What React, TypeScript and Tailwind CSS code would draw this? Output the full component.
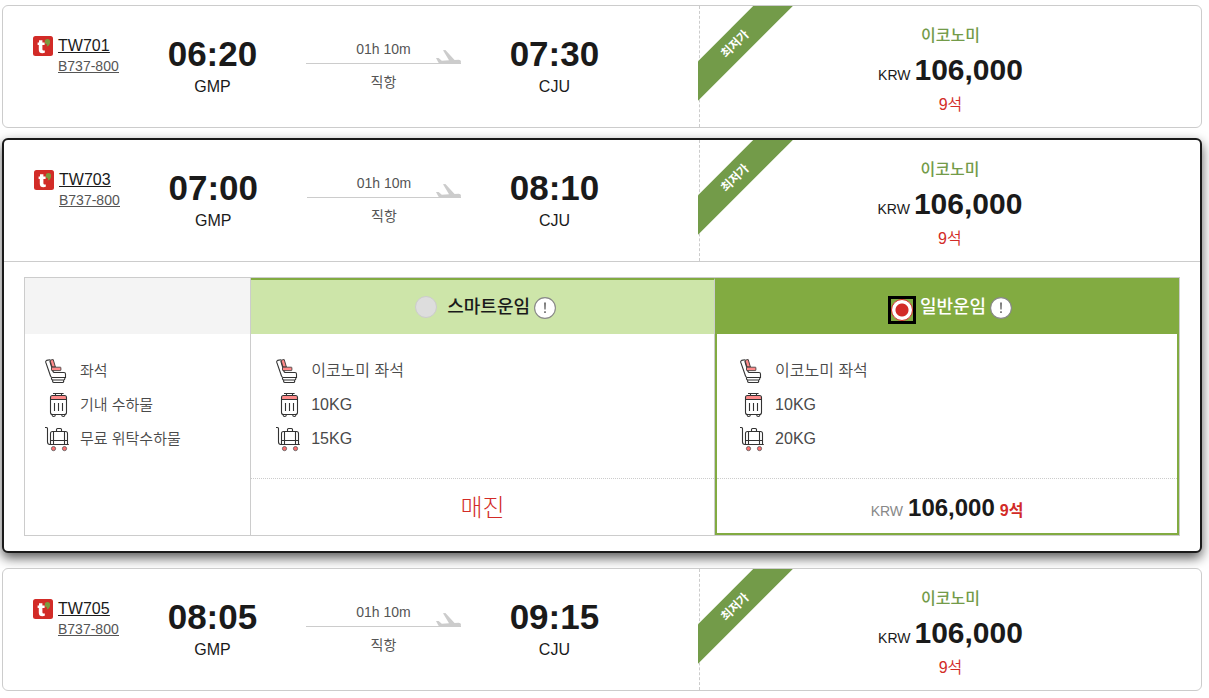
import { clsx } from "clsx";

type Flight = {
  id: string;
  aircraft: string;
  departure: string;
  arrival: string;
};

const flights: Flight[] = [
  { id: "TW701", aircraft: "B737-800", departure: "06:20", arrival: "07:30" },
  { id: "TW703", aircraft: "B737-800", departure: "07:00", arrival: "08:10" },
  { id: "TW705", aircraft: "B737-800", departure: "08:05", arrival: "09:15" },
];

const SeatIcon = () => (
  <svg width="24" height="26" viewBox="0 0 24 26" fill="none" stroke="#333" strokeWidth="1.1" className="shrink-0">
    <path d="M4.8 3.2 7.8 13Q8.2 14.5 9.4 14.5H19Q20.5 14.5 20.5 16V19.5H7.4Q6 19.5 5.6 18.2L.8 4.4Q.4 2.8 1.6 2.4L5 1.7" />
    <path d="M5 2.2 8.2 1.5 10.4 9H7z" fill="#ff8a8a" strokeWidth=".9" />
    <rect x="6.5" y="9.2" width="9.4" height="3.4" rx=".6" fill="#ff8a8a" strokeWidth=".8" />
    <path d="M6.5 19.5V20.8Q6.7 22 8 22H18.6Q19.8 22 19.8 20.8V19.5M7.6 22V23.4Q7.8 24.5 9 24.5H17.6Q18.6 24.5 18.7 23.4V22" />
  </svg>
);

const CarryOnIcon = () => (
  <svg width="24" height="26" viewBox="0 0 24 26" fill="none" stroke="#333" strokeWidth="1.1" className="shrink-0">
    <path d="M5.5 7.5V6Q5.5 4 7.5 4H19.5Q21.5 4 21.5 6V7.5z" fill="#ff8a8a" stroke="none" />
    <path d="M8 1.5H18.6M10.5 1.5V4M16.5 1.5V4" />
    <rect x="5.5" y="3.5" width="16" height="19" rx="2" />
    <path d="M5.5 7.5H21.5M9.5 11V19M13.5 11V19M17.5 11V19" />
    <path d="M7 22.8Q7.2 24.5 8.7 24.5T10.4 22.8M16.6 22.8Q16.8 24.5 18.3 24.5T20 22.8" />
  </svg>
);

const CheckedBagIcon = () => (
  <svg width="24" height="26" viewBox="0 0 24 26" fill="none" stroke="#333" strokeWidth="1.1" className="shrink-0">
    <path d="M0 1.5H1.4Q2.5 1.5 2.5 2.8V16Q2.5 18.5 5 18.5H23.8" />
    <path d="M5.5 18.5V7.5Q5.5 5.5 7.5 5.5H20.5Q22.5 5.5 22.5 7.5V18.5" />
    <path d="M8.5 5.5V18.5M19.5 5.5V18.5M5.5 14.5H22.5M11.5 5.5V3.5Q11.5 2.5 12.5 2.5H15.5Q16.5 2.5 16.5 3.5V5.5" />
    <circle cx="8.5" cy="22.6" r="2.1" fill="#ff7070" stroke="#555" strokeWidth=".8" />
    <circle cx="19.5" cy="22.6" r="2.1" fill="#ff7070" stroke="#555" strokeWidth=".8" />
  </svg>
);

const AirlineLogo = () => (
  <svg width="20" height="20" viewBox="0 0 20 20" className="shrink-0">
    <rect width="20" height="20" rx="2.5" fill="#d22b27" />
    <path d="M6 4.2H9.4V6.6H11.6V9H9.4V13.2Q9.4 14.6 10.6 14.6H11.8V16.8Q10.8 17.2 9.4 17.2 5.8 17.2 5.8 13.7V9H4.6V6.6H6z" fill="#fff" />
    <path d="M14.4 3A2.8 2.8 0 0 1 17.1 5.9Q17.1 9.4 13.4 10.6 14.4 9.2 14.1 8.4A2.6 2.6 0 0 1 11.8 5.7 2.6 2.6 0 0 1 14.4 3z" fill="#7b9a3e" />
  </svg>
);

const PlaneIcon = () => (
  <svg width="25" height="14" viewBox="0 0 25 14" fill="#ccc" className="absolute right-0 -bottom-px">
    <path d="M0 8H2.6L5.8 10.7 13 10.3 7 .2 9.4 0 18.6 10 22.5 9.8Q25 9.8 25 11.8 25 14 22 14H5.2Q3.4 14 2.4 12.4z" />
  </svg>
);

const fareRows = [
  { label: "좌석", icon: SeatIcon, smart: "이코노미 좌석", regular: "이코노미 좌석" },
  { label: "기내 수하물", icon: CarryOnIcon, smart: "10KG", regular: "10KG" },
  { label: "무료 위탁수하물", icon: CheckedBagIcon, smart: "15KG", regular: "20KG" },
];

const InfoButton = ({ label }: { label: string }) => (
  <button type="button" aria-label={label} className="mt-0.5 size-[22px] shrink-0">
    <svg width="22" height="22" viewBox="0 0 22 22">
      <circle cx="11" cy="11" r="10.4" fill="#fff" stroke="#888" strokeWidth="1.1" />
      <path d="M10 5.5H12L11.7 12.6H10.3zM10.1 14.2H11.9V16H10.1z" fill="#777" />
    </svg>
  </button>
);

const Airport = ({ time, code }: { time: string; code: string }) => (
  <div className="pt-7 text-center text-[#1a1a1a]">
    <p className="text-[35px] leading-10 font-bold">{time}</p>
    <p className="text-base leading-[26px]">{code}</p>
  </div>
);

const FlightSummary = ({ flight }: { flight: Flight }) => (
  <div className="grid h-[121px] grid-cols-[696fr_502fr]">
    <div className="grid grid-cols-[114fr_188fr_155fr_188fr_51fr]">
      <div className="flex items-start gap-[5px] pt-[30px] pl-[30px]">
        <AirlineLogo />
        <div className="flex flex-col items-start whitespace-nowrap underline">
          <a href="#flight" className="text-base leading-5 text-[#1a1a1a]">{flight.id}</a>
          <a href="#aircraft" className="text-sm leading-5 text-[#555]">{flight.aircraft}</a>
        </div>
      </div>
      <Airport time={flight.departure} code="GMP" />
      <div className="pt-[33px] text-center text-sm leading-5 text-[#555]">
        <p className="relative border-b border-[#ccc] pb-1">
          01h 10m
          <PlaneIcon />
        </p>
        <p className="pt-2">직항</p>
      </div>
      <Airport time={flight.arrival} code="CJU" />
    </div>

    <div className="relative border-l border-dashed border-[#ccc] pt-[18px] text-center">
      <div className="absolute top-0 -left-0.5 size-24 overflow-hidden">
        <p className="absolute top-6 -left-8 h-7 w-[138px] -rotate-45 bg-[#739b49] text-center text-xs leading-7 font-bold text-white">
          최저가
        </p>
      </div>
      <p className="text-base leading-6 font-medium text-[#739b49]">이코노미</p>
      <p className="text-[30px] leading-[44px] font-bold text-[#1a1a1a]">
        <span className="mr-1 text-sm font-normal">KRW</span>
        106,000
      </p>
      <p className="text-base leading-[26px] font-[350] text-[#d22b27]">9석</p>
    </div>
  </div>
);

const FareTable = () => (
  <table className="w-full table-fixed border-separate border-spacing-0 border border-[#ccc] text-[#4a4a4a]">
    <colgroup>
      <col className="w-[19.6%]" />
      <col className="w-[40.2%]" />
      <col className="w-[40.2%]" />
    </colgroup>
    <thead>
      <tr className="h-14 text-lg">
        <td className="border-r border-[#ccc] bg-[#f4f4f4] p-0" />
        <th className="border-t-2 border-r border-t-[#82ab41] border-r-[#ccc] bg-[#cde5a9] p-0 font-medium text-[#1a1a1a]">
          <div className="flex items-center justify-center pl-1.5">
            <input
              id="fare-smart"
              type="radio"
              name="fare"
              disabled
              className="mr-2.5 size-[22px] appearance-none rounded-full border border-[#ccc] bg-[#ddd]"
            />
            <label htmlFor="fare-smart" className="mr-1">스마트운임</label>
            <InfoButton label="스마트운임 안내" />
          </div>
        </th>
        <th className="bg-[#82ab41] p-0 font-medium text-white">
          <div className="flex items-center justify-center pt-0.5 pl-1.5">
            <span className="mt-1.5 mr-1 border-3 border-black">
              <input
                id="fare-regular"
                type="radio"
                name="fare"
                defaultChecked
                className="block size-[22px] appearance-none rounded-full border border-[#d22b27] bg-white bg-[radial-gradient(circle,#d22b27_6px,#fff_7px)]"
              />
            </span>
            <label htmlFor="fare-regular" className="mr-1">일반운임</label>
            <InfoButton label="일반운임 안내" />
          </div>
        </th>
      </tr>
    </thead>
    <tbody>
      {fareRows.map(({ label, icon: Icon, smart, regular }, i) => {
        const pad = clsx(i === 0 && "pt-5", i === fareRows.length - 1 && "pb-[22px]");
        return (
          <tr key={label} className="text-left text-base font-[350]">
            <th scope="row" className={clsx("border-r border-[#ccc] pl-5 text-[15px] font-[350]", pad)}>
              <div className="flex h-[34px] items-center gap-[11px]">
                <Icon />
                {label}
              </div>
            </th>
            <td className={clsx("border-r border-[#ccc] pl-[25px]", pad)}>
              <div className="flex h-[34px] items-center gap-[11px]">
                <Icon />
                {smart}
              </div>
            </td>
            <td className={clsx("border-x-2 border-[#82ab41] pl-[23px]", pad)}>
              <div className="flex h-[34px] items-center gap-[11px]">
                <Icon />
                {regular}
              </div>
            </td>
          </tr>
        );
      })}
      <tr className="h-[57px] text-center">
        <td className="border-r border-[#ccc] p-0" />
        <td className="border-r border-[#ccc] p-0">
          <p className="h-[57px] border-t border-dotted border-[#ccc] text-2xl leading-[58px] font-light text-[#d22b27]">
            매진
          </p>
        </td>
        <td className="border-x-2 border-b-2 border-[#82ab41] p-0">
          <p className="h-[55px] border-t border-dotted border-[#ccc] text-2xl leading-[58px] font-bold text-[#1a1a1a]">
            <span className="mr-[5px] text-sm font-normal text-[#888]">KRW</span>
            106,000
            <span className="ml-[5px] text-base text-[#d22b27]">9석</span>
          </p>
        </td>
      </tr>
    </tbody>
  </table>
);

const App = () => {
  const selected = "TW703";

  return (
    <main className="flex flex-col pt-[5px] pr-[7px] pb-[7px] pl-0.5 font-['Liberation_Sans','Noto_Sans_CJK_KR',sans-serif]">
      {flights.map((flight) =>
        flight.id === selected ? (
          <section
            key={flight.id}
            className="mt-2.5 mb-[15px] rounded-md border-2 border-[#1a1a1a] bg-white shadow-[0_5px_12px_rgba(0,0,0,0.65)]"
          >
            <FlightSummary flight={flight} />
            <div className="border-t border-[#ccc] px-5 py-[15px]">
              <FareTable />
            </div>
          </section>
        ) : (
          <section key={flight.id} className="relative rounded-md border border-[#ccc] bg-white">
            <FlightSummary flight={flight} />
          </section>
        ),
      )}
    </main>
  );
};

export default App;
